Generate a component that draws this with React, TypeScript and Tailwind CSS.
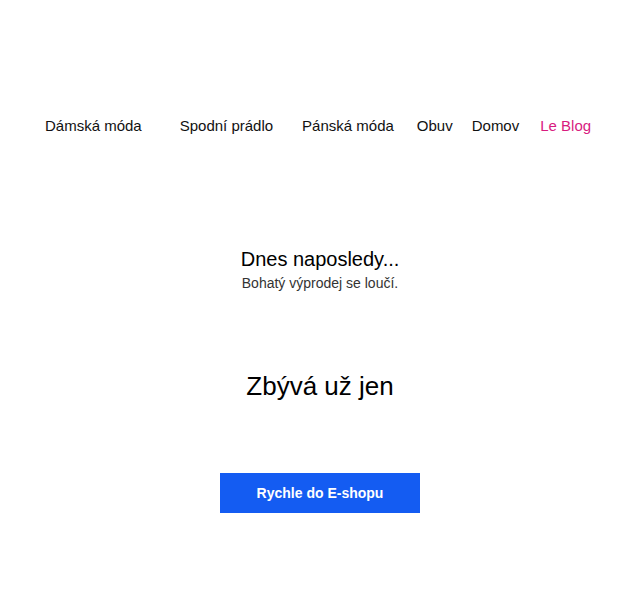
export default function App() {
  const links = [
    { label: 'Dámská móda', cls: 'ml-0' },
    { label: 'Spodní prádlo', cls: 'ml-[38px]' },
    { label: 'Pánská móda', cls: 'ml-[29px]' },
    { label: 'Obuv', cls: 'ml-[23px]' },
    { label: 'Domov', cls: 'ml-[19px]' },
  ]

  return (
    <div className="min-h-screen bg-white font-['Liberation_Sans',Arial,sans-serif] text-black">
      <nav className="flex items-center pt-[116px] pl-[45px] text-[15px] leading-[20px]">
        {links.map((l) => (
          <a key={l.label} href="#" className={`${l.cls} text-[#111]`}>
            {l.label}
          </a>
        ))}
        <a href="#" className="ml-[21px] text-[#d81b7f]">
          Le Blog
        </a>
      </nav>

      <section className="mt-[111px] flex flex-col items-center">
        <h2 className="text-[20px] leading-[24px]">Dnes naposledy...</h2>
        <p className="mt-[3px] text-[14px] leading-[18px] text-[#333]">Bohatý výprodej se loučí.</p>
      </section>

      <section className="mt-[79px] flex flex-col items-center">
        <h1 className="text-[26px] leading-[30px]">Zbývá už jen</h1>
        <a
          href="#"
          className="mt-[72px] flex h-[40px] w-[200px] items-center justify-center bg-[#145cf2] text-[14px] font-bold text-white"
        >
          Rychle do E-shopu
        </a>
      </section>
    </div>
  )
}
